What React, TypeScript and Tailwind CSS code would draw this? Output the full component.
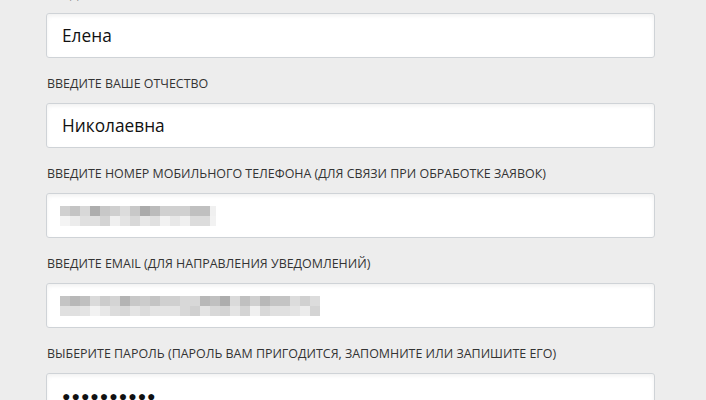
import React from 'react';

const phoneTop = ['#d0d0d0', '#c4c4c4', '#d8d8d8', '#adadad', '#c8c8c8', '#cfcfcf', '#dcdcdc', '#c8c8c8', '#ababab', '#bbbbbb', '#d0d0d0', '#d0d0d0', '#d0d0d0', '#c0c0c0', '#c0c0c0', '#f0f0f0'];
const phoneBottom = ['#f4f4f4', '#ececec', '#e0e0e0', '#e0e0e0', '#d4d4d4', '#f0f0f0', '#e4e4e4', '#d8d8d8', '#e8e8e8', '#e0e0e0', '#f2f2f2', '#e8e8e8', '#f0f0f0', '#dcdcdc', '#dcdcdc', '#f2f2f2'];

const emailTop = ['#c4c4c4', '#b8b8b8', '#c0c0c0', '#dadada', '#cccccc', '#d4d4d4', '#b4b4b4', '#c8c8c8', '#cccccc', '#c4c4c4', '#d0d0d0', '#d0d0d0', '#d8d8d8', '#d8d8d8', '#b8b8b8', '#c0c0c0', '#adadad', '#dadada', '#c0c0c0', '#d0d0d0', '#b8b8b8', '#c4c4c4', '#c4c4c4', '#dcdcdc', '#d0d0d0', '#dcdcdc'];
const emailBottom = ['#e0e0e0', '#e0e0e0', '#e4e4e4', '#f2f2f2', '#e8e8e8', '#dcdcdc', '#d8d8d8', '#e4e4e4', '#dcdcdc', '#e4e4e4', '#e4e4e4', '#e4e4e4', '#d8d8d8', '#d0d0d0', '#e4e4e4', '#d8d8d8', '#d4d4d4', '#e4e4e4', '#d4d4d4', '#f0f0f0', '#d8d8d8', '#e0e0e0', '#e0e0e0', '#e4e4e4', '#ececec', '#d4d4d4'];

// blurred-out personal data, drawn as 10px mosaic cells; the last cell may be cut short
const Pixelated = ({ top, bottom, lastWidth = 10 }: { top: string[]; bottom: string[]; lastWidth?: number }) => (
  <div className="flex flex-col">
    {[top, bottom].map((row, r) => (
      <div key={r} className="flex">
        {row.map((c, i) => (
          <div
            key={i}
            className="h-[10px]"
            style={{ backgroundColor: c, width: i === row.length - 1 ? lastWidth : 10 }}
          />
        ))}
      </div>
    ))}
  </div>
);

const Field = ({ label, children }: { label: string; children?: React.ReactNode }) => (
  <div className="pt-[18px]">
    <div className="text-[12.45px] leading-[16px] uppercase text-[#333333] pl-px">{label}</div>
    <div className="mt-[11px] h-[45px] bg-white border border-[#cfd3d7] rounded-[3px] shadow-[inset_0_2px_4px_rgba(0,0,0,0.06)] flex items-center pl-[15px] text-[17.3px] text-[#111111]">
      {children}
    </div>
  </div>
);

export default function App() {
  return (
    <div className="w-[706px] h-[400px] overflow-hidden bg-[#ededed] font-['Open_Sans',sans-serif]">
      <div className="ml-[46px] w-[609px] mt-[-32px]">
        <Field label="Введите ваше имя">Елена</Field>
        <Field label="Введите ваше отчество">Николаевна</Field>
        <Field label="Введите номер мобильного телефона (для связи при обработке заявок)">
          <div className="-ml-[2px]">
            <Pixelated top={phoneTop} bottom={phoneBottom} lastWidth={6} />
          </div>
        </Field>
        <Field label="Введите email (для направления уведомлений)">
          <div className="-ml-[2px]">
            <Pixelated top={emailTop} bottom={emailBottom} />
          </div>
        </Field>
        <Field label="Выберите пароль (пароль вам пригодится, запомните или запишите его)">
          <span className="tracking-[1px] text-[14px]">●●●●●●●●●●</span>
        </Field>
      </div>
    </div>
  );
}
